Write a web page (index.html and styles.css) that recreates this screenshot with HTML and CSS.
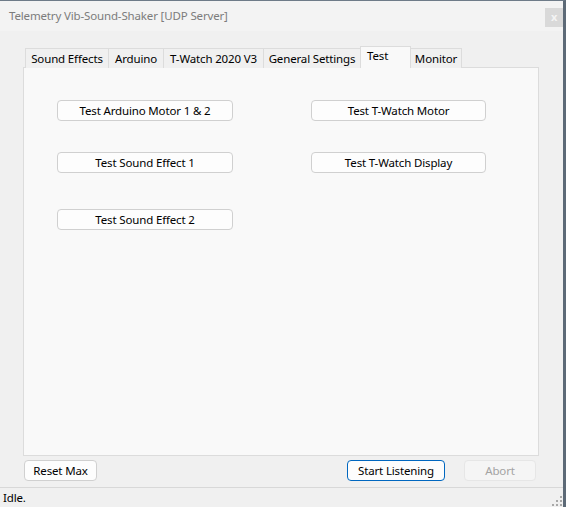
FILE: index.html
```html
<!DOCTYPE html>
<html>
<head>
<meta charset="utf-8">
<link rel="stylesheet" href="styles.css">
</head>
<body>
<div class="window">
  <div class="titlebar">
    <span class="title">Telemetry Vib-Sound-Shaker [UDP Server]</span>
    <span class="close">x</span>
  </div>
  <div class="client">
    <div class="tabs">
      <div class="tab w1">Sound Effects</div>
      <div class="tab w2">Arduino</div>
      <div class="tab w3">T-Watch 2020 V3</div>
      <div class="tab w4">General Settings</div>
      <div class="tab active">Test</div>
      <div class="tab w6">Monitor</div>
    </div>
    <div class="panel">
      <div class="col left">
        <button class="btn b1">Test Arduino Motor 1 &amp; 2</button>
        <button class="btn b2">Test Sound Effect 1</button>
        <button class="btn b3">Test Sound Effect 2</button>
      </div>
      <div class="col right">
        <button class="btn b1 wr">Test T-Watch Motor</button>
        <button class="btn b2 wr">Test T-Watch Display</button>
      </div>
    </div>
    <div class="actions">
      <button class="btn reset">Reset Max</button>
      <span class="spacer"></span>
      <button class="btn start">Start Listening</button>
      <button class="btn abort" disabled>Abort</button>
    </div>
  </div>
  <div class="status">
    <span class="status-text">Idle.</span>
    <svg class="grip" width="12" height="12" viewBox="0 0 12 12">
      <rect x="9" y="1" width="2" height="2" fill="#a8a8a8"/>
      <rect x="5" y="5" width="2" height="2" fill="#a8a8a8"/>
      <rect x="9" y="5" width="2" height="2" fill="#a8a8a8"/>
      <rect x="1" y="9" width="2" height="2" fill="#a8a8a8"/>
      <rect x="5" y="9" width="2" height="2" fill="#a8a8a8"/>
      <rect x="9" y="9" width="2" height="2" fill="#a8a8a8"/>
    </svg>
  </div>
</div>
</body>
</html>
```
FILE: styles.css
```css
html, body {
  margin: 0;
  padding: 0;
}
body {
  width: 566px;
  height: 507px;
  background: #f0f0f0;
  font-family: "Noto Sans", "Open Sans", sans-serif;
  font-size: 11.5px;
  letter-spacing: -0.15px;
  color: #000;
  overflow: hidden;
}
.window {
  width: 563px;
  height: 506px;
  border-top: 1px solid #6e7b88;
  border-right: 3px solid #5d6a77;
  background: #f0f0f0;
  display: flex;
  flex-direction: column;
}
.titlebar {
  height: 30px;
  background: #f3f3f3;
  display: flex;
  align-items: flex-start;
  padding-left: 9px;
  box-sizing: border-box;
}
.title {
  color: #7c7c7c;
  line-height: 30px;
  flex: 1;
}
.close {
  margin-top: 7px;
  width: 18px;
  height: 19px;
  background: #d9d9d9;
  color: #f4f4f4;
  font-size: 11px;
  line-height: 18px;
  text-align: center;
  font-weight: bold;
}
.client {
  padding: 16px 0 0 23px;
  height: 456px;
  box-sizing: border-box;
  display: flex;
  flex-direction: column;
}
.tabs {
  display: flex;
  align-items: flex-end;
  height: 21px;
  padding-left: 2px;
  margin-bottom: -1px;
  position: relative;
  z-index: 1;
}
.tab {
  height: 20px;
  box-sizing: border-box;
  border: 1px solid #dcdcdc;
  border-bottom: none;
  margin-left: -1px;
  background: #f0f0f0;
  text-align: center;
  line-height: 19px;
  white-space: nowrap;
}
.tab:first-child { margin-left: 0; }
.w1 { width: 84px; }
.w2 { width: 56px; }
.w3 { width: 101px; }
.w4 { width: 98px; }
.w6 { width: 52px; }
.tab.active {
  width: 51px;
  height: 22px;
  background: #f9f9f9;
  text-align: left;
  padding-left: 6px;
  line-height: 17px;
}
.panel {
  width: 516px;
  height: 389px;
  box-sizing: border-box;
  border: 1px solid #dcdcdc;
  background: #f9f9f9;
  display: flex;
  padding: 32px 0 0 33px;
  gap: 78px;
}
.col {
  display: flex;
  flex-direction: column;
}
.btn {
  font-family: inherit;
  font-size: 11.5px;
  letter-spacing: -0.15px;
  color: #000;
  background: #fdfdfd;
  border: 1px solid #d0d0d0;
  border-radius: 4px;
  height: 21px;
  padding: 0;
  line-height: 19px;
  box-sizing: border-box;
}
.left .btn { width: 176px; }
.right .btn { width: 175px; }
.b2 { margin-top: 31px; }
.b3 { margin-top: 36px; }
.actions {
  display: flex;
  padding-top: 4px;
  width: 512px;
  padding-left: 1px;
}
.spacer { flex: 1; }
.reset { width: 73px; }
.start {
  width: 98px;
  border-color: #0067c0;
}
.abort {
  width: 72px;
  margin-left: 19px;
  background: #f5f5f5;
  border-color: #e6e6e6;
  color: #a3a3a3;
}
.status {
  flex: 1;
  border-top: 1px solid #d8d8d8;
  display: flex;
  align-items: flex-start;
  position: relative;
}
.status-text {
  padding-left: 3px;
  line-height: 19px;
}
.grip {
  position: absolute;
  right: 0;
  bottom: 0;
}
```
